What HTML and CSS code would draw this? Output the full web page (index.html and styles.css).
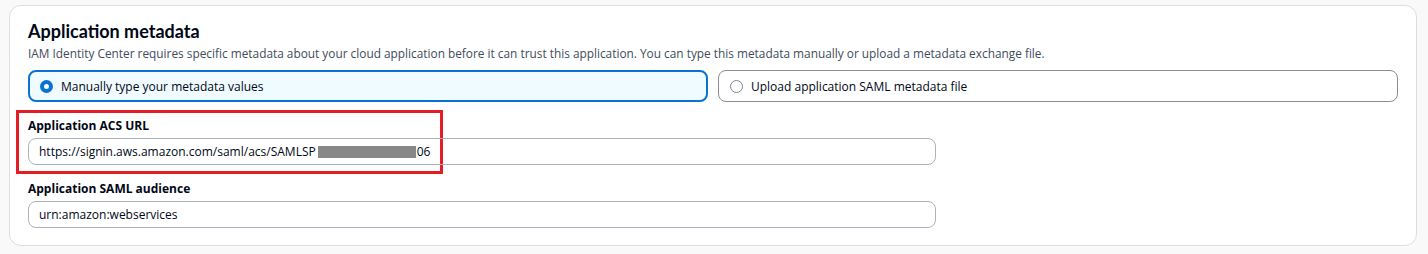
FILE: index.html
```html
<!doctype html>
<html lang="en">
    <head>
        <meta charset="UTF-8" />
        <title>Application metadata</title>
        <link rel="stylesheet" href="styles.css">
    </head>
    <body>
        <div class="card">
            <h2>Application metadata</h2>
            <p class="desc">
                IAM Identity Center requires specific metadata about your cloud application before it can trust this application. You can type this metadata manually or upload a metadata exchange file.
            </p>

            <div class="tiles">
                <label class="tile selected">
                    <span class="radio"></span>
                    Manually type your metadata values
                </label>
                <label class="tile">
                    <span class="radio"></span>
                    Upload application SAML metadata file
                </label>
            </div>

            <div class="field highlight">
                <div class="label">Application ACS URL</div>
                <div class="input">https://signin.aws.amazon.com/saml/acs/SAMLSP<span class="redact"></span>06</div>
            </div>

            <div class="field">
                <div class="label">Application SAML audience</div>
                <div class="input">urn:amazon:webservices</div>
            </div>
        </div>
    </body>
</html>
```

FILE: styles.css
```css
body {
    margin: 0;
    padding: 5px 11px 8px 9px;
    background-color: #f9f9f9;
    font-family: "Open Sans", "Noto Sans", Arial, sans-serif;
    color: #000716;
}

.card {
    background: #ffffff;
    border: 1px solid #dedede;
    border-radius: 12px;
    padding: 14px 18px 17px 18px;
}

h2 {
    margin: 0;
    font-family: Lato, "Open Sans", Arial, sans-serif;
    font-size: 18px;
    font-weight: 700;
    line-height: 22px;
}

.desc {
    margin: 3px 0 0;
    font-size: 11.85px;
    line-height: 16px;
    color: #414d5c;
}

.tiles {
    display: flex;
    gap: 10px;
    margin-top: 9px;
}

.tile {
    flex: 1;
    display: flex;
    align-items: center;
    gap: 8px;
    height: 32px;
    box-sizing: border-box;
    padding: 0 11px;
    border: 1px solid #8c8c94;
    border-radius: 8px;
    font-size: 12px;
    color: #000716;
}

.tile.selected {
    border: 2px solid #0972d3;
    background: #f0fbff;
    padding: 0 10px;
}

.radio {
    width: 13px;
    height: 13px;
    border-radius: 50%;
    border: 1px solid #7d8998;
    box-sizing: border-box;
    background: #fff;
}

.selected .radio {
    border: 4px solid #0972d3;
}

.field {
    margin-top: 7px;
}

.field .label {
    font-size: 12px;
    font-weight: 700;
    line-height: 16px;
    margin-bottom: 4px;
}

.highlight {
    margin: 8px 0 0 -12px;
    width: 427px;
    box-sizing: border-box;
    border: 3px solid #e41c24;
    padding: 5px 0 6px 9px;
}

.input {
    width: 908px;
    height: 27px;
    box-sizing: border-box;
    border: 1px solid #aab2bd;
    border-radius: 8px;
    padding: 0 10px;
    font-size: 12px;
    line-height: 25px;
    color: #000716;
    white-space: nowrap;
}

.redact {
    display: inline-block;
    width: 98px;
    height: 12px;
    margin: 0 1px 0 2px;
    vertical-align: -2px;
    background: #888888;
}
```
